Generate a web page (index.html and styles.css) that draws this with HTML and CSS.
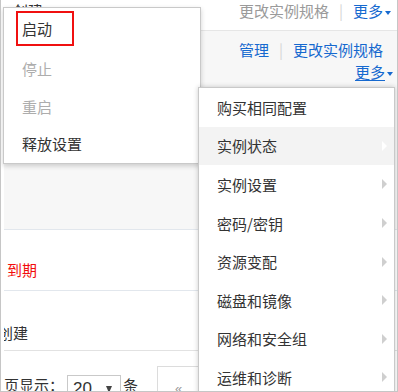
FILE: index.html
```html
<!DOCTYPE html>
<html lang="zh-CN">
<head>
<meta charset="utf-8">
<title>实例操作</title>
<link rel="stylesheet" href="styles.css">
</head>
<body>
<div class="frame">
  <div class="table">
    <div class="row row0">
      <div class="cell-main"><span class="peek">创建</span></div>
      <div class="cell-actions">
        <div class="act-line"><span class="muted">更改实例规格</span><span class="sep">|</span><a class="link">更多</a><i class="caret"></i></div>
      </div>
    </div>
    <div class="row row1">
      <div class="cell-main"></div>
      <div class="cell-actions">
        <div class="act-line"><a class="link">管理</a><span class="sep">|</span><a class="link">更改实例规格</a></div>
        <div class="act-line more-line"><a class="link underline">更多</a><i class="caret"></i></div>
      </div>
    </div>
    <div class="row row2">
      <div class="cell-main"><span class="expire">到期</span></div>
    </div>
    <div class="row row3">
      <div class="cell-main"><span class="created">创建</span></div>
    </div>
    <div class="footer">
      <span class="pp-label">每页显示：</span>
      <div class="select"><span class="sel-value">20</span><i class="sel-arrow"></i></div>
      <span class="pp-unit">条</span>
      <div class="pager">«</div>
    </div>
  </div>

  <div class="menu menu-left">
    <div class="mi mi-first">启动</div>
    <div class="mi disabled">停止</div>
    <div class="mi disabled">重启</div>
    <div class="mi mi-last">释放设置</div>
  </div>
  <div class="annot"></div>

  <div class="menu menu-right">
    <div class="ri"><span>购买相同配置</span></div>
    <div class="ri active"><span>实例状态</span><i class="arrow"></i></div>
    <div class="ri"><span>实例设置</span><i class="arrow"></i></div>
    <div class="ri"><span>密码/密钥</span><i class="arrow"></i></div>
    <div class="ri"><span>资源变配</span><i class="arrow"></i></div>
    <div class="ri"><span>磁盘和镜像</span><i class="arrow"></i></div>
    <div class="ri"><span>网络和安全组</span><i class="arrow"></i></div>
    <div class="ri"><span>运维和诊断</span><i class="arrow"></i></div>
  </div>
</div>
</body>
</html>
```

FILE: styles.css
```css
html, body {
  margin: 0;
  padding: 0;
  background: #fff;
}
body {
  font-family: "Noto Sans CJK SC", "Liberation Sans", sans-serif;
  font-size: 15px;
  color: #333;
}
.frame {
  position: relative;
  width: 398px;
  height: 392px;
  box-sizing: border-box;
  border: 1px solid #c6c6c6;
  border-top: 0;
  padding-left: 3px;
  overflow: hidden;
}
.table {
  overflow: hidden;
  height: 391px;
}
.row {
  display: flex;
  box-sizing: border-box;
}
.row0 {
  height: 31px;
  border-bottom: 1px solid #e6e6e6;
}
.row1 {
  height: 199px;
  background: #f7f7f7;
  border-bottom: 1px solid #e2e7ed;
}
.row2 {
  height: 61px;
  border-bottom: 1px solid #e2e7ed;
}
.row3 {
  height: 60px;
  border-bottom: 1px solid #e2e2e2;
}
.cell-main {
  flex: 1;
  line-height: 22px;
}
.cell-actions {
  width: 158px;
  box-sizing: border-box;
  text-align: left;
  padding-right: 4px;
  line-height: 22px;
}
.row1 .cell-actions {
  padding-top: 8px;
}
.act-line {
  white-space: nowrap;
}
.more-line {
  text-align: right;
}
.muted {
  color: #9a9a9a;
}
.link {
  color: #1669cf;
}
.underline {
  text-decoration: underline;
  text-underline-offset: 2px;
}
.sep {
  color: #d6d6d6;
  margin: 0 10px;
}
.caret {
  display: inline-block;
  width: 0;
  height: 0;
  border-top: 4px solid #1669cf;
  border-left: 3.5px solid transparent;
  border-right: 3.5px solid transparent;
  margin-left: 2px;
  vertical-align: middle;
}
.peek {
  display: inline-block;
  margin-top: -11px;
  padding-left: 9px;
}
.expire {
  display: inline-block;
  color: #f20d0d;
  margin-top: 29px;
  padding-left: 3px;
}
.created {
  display: inline-block;
  margin-top: 31px;
  margin-left: -6px;
}
.footer {
  display: flex;
  align-items: flex-start;
  height: 45px;
  line-height: 22px;
}
.pp-label {
  margin-top: 23px;
  margin-left: -15px;
  white-space: nowrap;
}
.select {
  margin-top: 24px;
  margin-left: 3px;
  width: 54px;
  height: 30px;
  box-sizing: border-box;
  border: 1px solid #c9c9c9;
  display: flex;
  align-items: flex-start;
  padding: 2px 8px 0 5px;
  font-family: "Liberation Sans", sans-serif;
  font-size: 17px;
  color: #333;
}
.sel-arrow {
  margin-left: auto;
  margin-top: 8px;
  width: 0;
  height: 0;
  border-top: 7px solid #444;
  border-left: 3.5px solid transparent;
  border-right: 3.5px solid transparent;
}
.pp-unit {
  margin-top: 23px;
  margin-left: 2px;
}
.pager {
  margin-top: 15px;
  margin-left: 19px;
  width: 60px;
  height: 40px;
  box-sizing: border-box;
  border: 1px solid #dcdcdc;
  padding: 11px 0 0 17px;
  color: #999;
  font-family: "Liberation Sans", sans-serif;
  font-size: 13px;
}
.menu {
  position: absolute;
  background: #fff;
  border: 1px solid #c9c9c9;
  box-sizing: border-box;
  box-shadow: 0 2px 5px rgba(0, 0, 0, 0.18);
}
.menu-left {
  left: 2px;
  top: 7px;
  width: 198px;
  height: 157px;
}
.mi {
  height: 38px;
  line-height: 38px;
  padding-left: 18px;
}
.mi-first {
  height: 42px;
  line-height: 42px;
}
.mi-last {
  height: 36px;
  line-height: 36px;
}
.disabled {
  color: #adadad;
}
.annot {
  position: absolute;
  left: 15px;
  top: 11px;
  width: 58px;
  height: 35px;
  box-sizing: border-box;
  border: 2px solid #f01010;
}
.menu-right {
  left: 197px;
  top: 87px;
  width: 197px;
  height: 330px;
  box-shadow: 0 0 5px rgba(0, 0, 0, 0.2);
}
.ri {
  height: 38.6px;
  display: flex;
  align-items: center;
  justify-content: space-between;
  padding: 0 7px 0 18px;
}
.ri.active {
  background: #f3f3f3;
}
.arrow {
  width: 0;
  height: 0;
  border-left: 5px solid #cfcfcf;
  border-top: 5px solid transparent;
  border-bottom: 5px solid transparent;
}
.ri.active .arrow {
  border-left-color: #fff;
}
```
